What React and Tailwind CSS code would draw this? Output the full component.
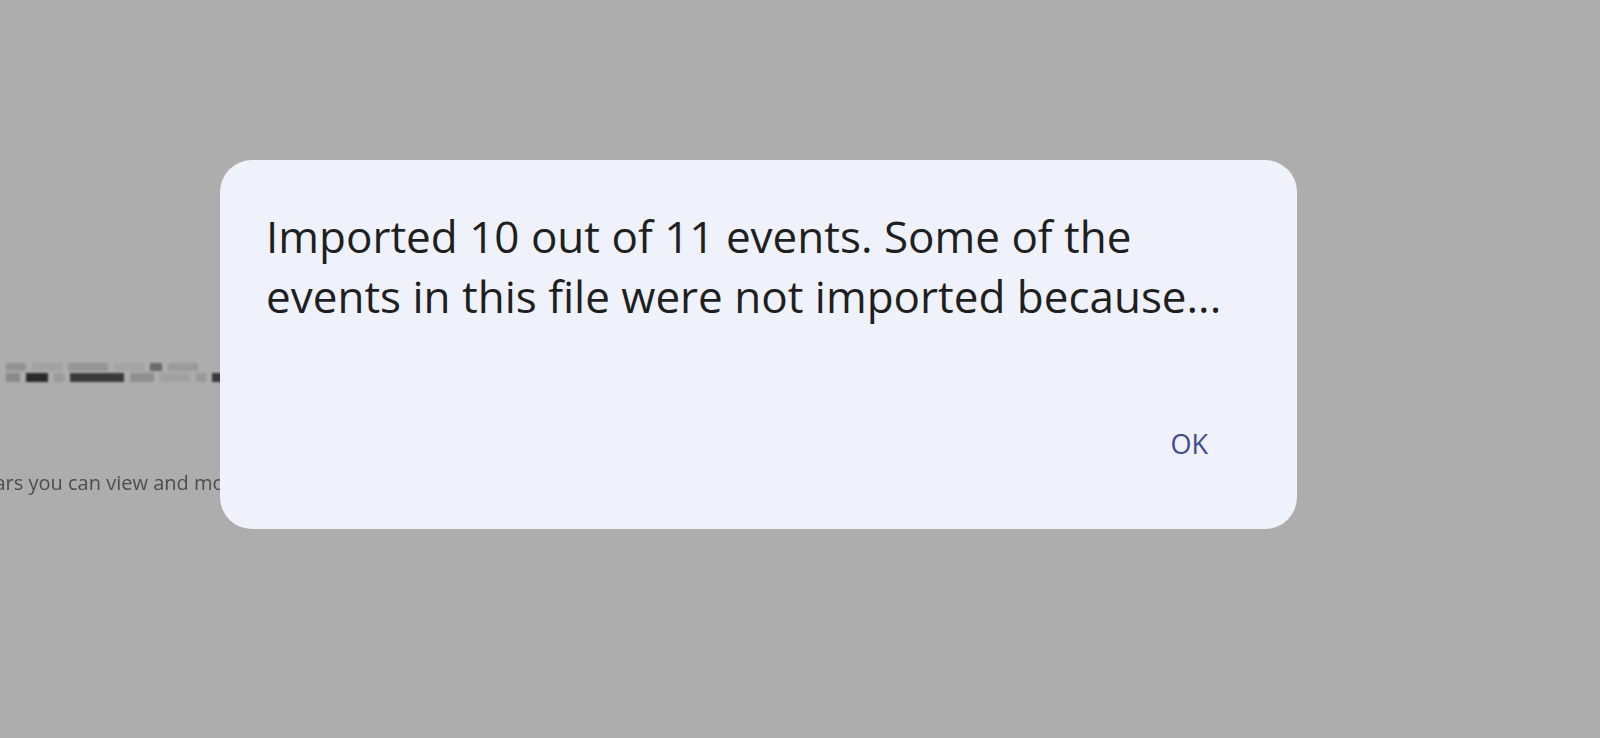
export default function App() {
  return (
    <div className="relative h-[738px] w-full overflow-hidden bg-[#adadad]" style={{ fontFamily: '"Open Sans", "Liberation Sans", sans-serif' }}>
      <div className="flex flex-col pt-[358px]">
        <div className="flex h-[28px] flex-col justify-center gap-[2px] pl-[6px] blur-[1.2px]">
          <div className="flex items-center gap-[6px]">
            <div className="h-[8px] w-[20px] bg-[#939393]" />
            <div className="h-[8px] w-[30px] bg-[#a2a2a2]" />
            <div className="h-[8px] w-[40px] bg-[#959595]" />
            <div className="h-[8px] w-[30px] bg-[#a4a4a4]" />
            <div className="h-[8px] w-[12px] bg-[#6a6a6a]" />
            <div className="h-[8px] w-[30px] bg-[#9a9a9a]" />
          </div>
          <div className="flex items-center gap-[6px]">
            <div className="h-[9px] w-[14px] bg-[#8a8a8a]" />
            <div className="h-[9px] w-[22px] bg-[#2a2a2a]" />
            <div className="h-[9px] w-[10px] bg-[#9a9a9a]" />
            <div className="h-[9px] w-[54px] bg-[#3a3a3a]" />
            <div className="h-[9px] w-[24px] bg-[#8f8f8f]" />
            <div className="h-[9px] w-[30px] bg-[#a0a0a0]" />
            <div className="h-[9px] w-[10px] bg-[#9a9a9a]" />
            <div className="h-[9px] w-[12px] bg-[#3a3a3a]" />
          </div>
        </div>
        <div className="mt-[85px] -ml-[70px] whitespace-nowrap text-[20px] leading-[24px] text-[#4d4d4d] blur-[0.6px]">
          Calendars you can view and modify
        </div>
      </div>

      <div className="absolute left-[220px] top-[160px] flex h-[369px] w-[1077px] flex-col rounded-[32px] bg-[#eff2fb]">
        <p className="pl-[46px] pr-[40px] pt-[46px] text-[44px] leading-[60px] text-[#1f1f1f]">
          Imported 10 out of 11 events. Some of the
          <br />
          events in this file were not imported because...
        </p>
        <div className="mt-auto flex justify-end pb-[70px] pr-[89px]">
          <span className="text-[27px] font-medium leading-[30px] text-[#3f4b8c]">OK</span>
        </div>
      </div>
    </div>
  );
}
